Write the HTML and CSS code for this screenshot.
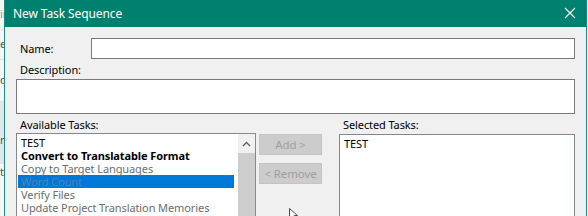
FILE: index.html
```html
<!DOCTYPE html>
<html>
<head>
<meta charset="utf-8">
<link rel="stylesheet" href="styles.css">
</head>
<body>
<div class="screen">
  <div class="behind">
    <div class="brow r1">in</div>
    <div class="brow r2">er</div>
    <div class="brow r3">on</div>
    <div class="brow r4">ri</div>
    <div class="brow r5">ta</div>
  </div>
  <div class="dialog">
    <div class="titlebar">
      <span class="title">New Task Sequence</span>
      <svg class="close" width="12" height="12" viewBox="0 0 12 12"><path d="M1 1L11 11M11 1L1 11" stroke="#fff" stroke-width="1.1" fill="none"/></svg>
    </div>
    <div class="content">
      <div class="name-row">
        <label class="lbl name-lbl">Name:</label>
        <div class="input"></div>
      </div>
      <label class="lbl desc-lbl">Description:</label>
      <div class="textarea"></div>
      <div class="lists">
        <div class="col avail">
          <label class="lbl list-lbl">Available Tasks:</label>
          <div class="listbox">
            <div class="items">
              <div class="item">TEST</div>
              <div class="item bold">Convert to Translatable Format</div>
              <div class="item dim">Copy to Target Languages</div>
              <div class="item dim sel">Word Count</div>
              <div class="item dim">Verify Files</div>
              <div class="item dim">Update Project Translation Memories</div>
            </div>
            <div class="scrollbar">
              <svg class="up" width="9" height="6" viewBox="0 0 9 6"><path d="M1 5L4.5 1.5L8 5" stroke="#606060" stroke-width="1.3" fill="none"/></svg>
              <div class="thumb"></div>
            </div>
          </div>
        </div>
        <div class="buttons">
          <div class="btn">Add &gt;</div>
          <div class="btn">&lt; Remove</div>
        </div>
        <div class="col selected">
          <label class="lbl list-lbl sel-lbl">Selected Tasks:</label>
          <div class="listbox plain">
            <div class="items">
              <div class="item">TEST</div>
            </div>
          </div>
        </div>
      </div>
    </div>
    <svg class="cursor" width="12" height="12" viewBox="0 0 12 12"><path d="M0.5 0.5L0.5 11L3 8.5L5 12L7 11L5.2 7.6L8.5 7.6Z" fill="#fff" stroke="#222" stroke-width="0.8"/></svg>
  </div>
</div>
</body>
</html>
```
FILE: styles.css
```css
* { box-sizing: border-box; }
html, body { margin: 0; padding: 0; }
body {
  width: 588px;
  height: 216px;
  overflow: hidden;
  background: #f0f0f0;
  font-family: "Noto Sans", "Open Sans", sans-serif;
  font-size: 11px;
  letter-spacing: -0.1px;
  color: #000;
}
.screen {
  display: flex;
  height: 216px;
}
.behind {
  width: 4px;
  flex: none;
  overflow: hidden;
  background: #f5f5f5;
  display: flex;
  flex-direction: column;
  font-size: 11px;
  color: #555;
}
.brow {
  display: flex;
  justify-content: flex-end;
  white-space: nowrap;
  direction: rtl;
  border-bottom: 1px solid #e2e2e2;
}
.r1 { height: 30px; padding-top: 6px; color: #9a9a9a; }
.r2 { height: 30px; padding-top: 6px; }
.r3 { height: 42px; padding-top: 12px; }
.r4 { height: 62px; padding-top: 30px; background: #dfe6ee; }
.r5 { height: 40px; padding-top: 0; border-bottom: none; }

.dialog {
  position: relative;
  width: 583px;
  flex: none;
  border-left: 1px solid #1a8b7c;
  border-right: 1px solid #1a8b7c;
  background: #f0f0f0;
  display: flex;
  flex-direction: column;
}
.titlebar {
  height: 27px;
  flex: none;
  background: #00806f;
  color: #fff;
  display: flex;
  align-items: center;
  justify-content: space-between;
  padding: 0 10px 1px 8px;
  font-size: 12px;
}
.close { margin-top: 0; }

.content {
  padding: 11px 10px 0 11px;
  display: flex;
  flex-direction: column;
}
.lbl {
  display: block;
  line-height: 14px;
}
.name-row {
  display: flex;
  align-items: center;
  height: 21px;
}
.name-lbl {
  width: 75px;
  padding-left: 4px;
  flex: none;
}
.input {
  width: 484px;
  height: 21px;
  background: #fff;
  border: 1px solid #7a7a7a;
}
.desc-lbl {
  margin-top: 4px;
  padding-left: 4px;
}
.textarea {
  margin-top: 2px;
  width: 559px;
  height: 35px;
  background: #fff;
  border: 1px solid #7a7a7a;
}
.lists {
  margin-top: 4px;
  display: flex;
  align-items: flex-start;
}
.col { display: flex; flex-direction: column; }
.avail { width: 240px; }
.selected { width: 236px; margin-left: 17px; }
.list-lbl { padding-left: 4px; }
.listbox {
  margin-top: 1px;
  height: 90px;
  background: #fff;
  border: 1px solid #828790;
  display: flex;
}
.plain { margin-top: 2px; }
.items {
  flex: 1;
  padding: 2px 4px 0 1px;
}
.item {
  height: 13px;
  line-height: 13px;
  padding-left: 3px;
  white-space: nowrap;
}
.bold { font-weight: 700; }
.dim { color: #6d6d6d; }
.sel { background: #0078d7; color: #5a7fae; }
.scrollbar {
  width: 17px;
  flex: none;
  background: #f0f0f0;
  display: flex;
  flex-direction: column;
  align-items: center;
}
.up { margin-top: 7px; }
.thumb {
  margin-top: 6px;
  width: 17px;
  flex: 1;
  background: #cdcdcd;
}
.buttons {
  width: 63px;
  margin-left: 3px;
  margin-top: 16px;
  display: flex;
  flex-direction: column;
  gap: 8px;
}
.btn {
  height: 21px;
  background: #cccccc;
  border: 1px solid #c4c4c4;
  color: #a0a0a0;
  display: flex;
  align-items: center;
  justify-content: center;
  font-size: 11.5px;
}
.cursor {
  position: absolute;
  left: 284px;
  top: 208px;
}
```
